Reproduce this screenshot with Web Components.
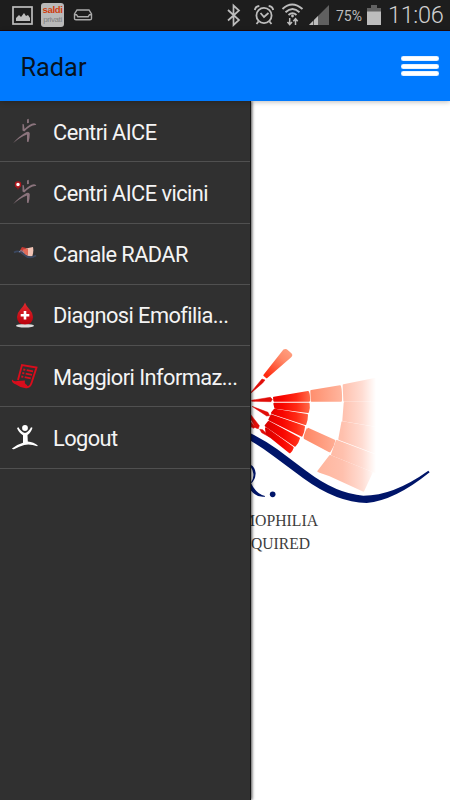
<!DOCTYPE html>
<html lang="it"><head><meta charset="utf-8"><title>Radar</title>
<style>html,body{margin:0;height:100%;overflow:hidden;background:#fff;font-family:Roboto,"Liberation Sans",sans-serif}</style></head>
<body><radar-app></radar-app>
<script>
function define(name, html){
  customElements.define(name, class extends HTMLElement{
    constructor(){super();const t=document.createElement('template');t.innerHTML=html;
      this.attachShadow({mode:'open'}).append(t.content.cloneNode(true));}
  });
}
define('status-bar',`<style>
:host{display:flex;box-sizing:border-box;height:31px;background:#1d1d1d;border-bottom:1px solid #230808;color:#bdbdbd;align-items:center}
svg{display:block;flex:none}
.pct{font-size:14px;width:29px;margin-left:5.500px;flex:none;white-space:nowrap;padding-top:2px}
.time{font-size:23.500px;font-weight:300;margin-left:6.500px;width:62px;flex:none;white-space:nowrap;color:#d0d0d0;letter-spacing:-.35px;line-height:30px}
.app{box-sizing:border-box;width:23px;height:24px;margin-left:8px;border-radius:3px;background:#b9b9b9;font:8px/9px "Liberation Sans",sans-serif;color:#808080;text-align:center;padding-top:2px;letter-spacing:-.4px}
.app b,.app span{display:block}
.app b{color:#d03c0c;font-size:9.500px;line-height:10px;letter-spacing:-.3px}
.gap{flex:1}
</style>
<svg width="21" height="19" style="margin-left:12px" viewBox="0 0 21 19"><rect x="1" y="1" width="19" height="17" fill="none" stroke="#bdbdbd" stroke-width="1.7"/><path d="M4 15v-3l3-3 2 2 3-4 2 3 2-1 2 3v3z" fill="#bdbdbd"/></svg>
<div class="app"><b>saldi</b><span>privati</span></div>
<svg width="20" height="12" style="margin-left:9px" viewBox="0 0 20 12"><path d="M4 1h12l2.500 4v4.500q0 1.300-1.500 1.300H3q-1.500 0-1.500-1.300V5zM1.500 5.700h2l1.300 2h10.400l1.300-2h2" fill="none" stroke="#aaa" stroke-width="1.400"/></svg>
<span class="gap"></span>
<svg width="115" height="30" viewBox="215 0 115 30"><path d="M227 10l11 10-5.500 5V5.500l5.500 5L227 20.500" fill="none" stroke="#bdbdbd" stroke-width="1.700"/>
<g fill="none" stroke="#bdbdbd" stroke-width="1.800"><circle cx="263" cy="15.500" r="7.600"/><path d="M259.500 13l3.500 4 4.500-4M257.500 21.500l-2 2.500M268.500 21.500l2 2.500M253.800 10q.5-3.500 4.500-4M272.200 10q-.5-3.500-4.500-4"/></g>
<g fill="none" stroke="#bdbdbd" stroke-width="1.900"><path d="M281.500 9q9.500-9 20 0M284.500 12.300q7-6.500 14 0M287.500 15q4-3.500 8 0"/></g><circle cx="291.500" cy="16" r="1.400" fill="#bdbdbd"/><path d="M288.700 18v6M286.500 22l2.200 2.700L291 22M294.500 25v-6M292.300 21.300l2.200-2.600 2.200 2.600" fill="none" stroke="#bdbdbd" stroke-width="1.500"/>
<path d="M308 25L328 5v20z" fill="#606060"/><path d="M308 25l4-4v4zM313 25v-5l4-4v9z" fill="#bdbdbd"/></svg>
<span class="pct">75%</span>
<svg width="16" height="22" style="margin-left:.5px" viewBox="0 0 16 22"><path d="M5 1h6v3h4v5H1V4h4z" fill="#626262"/><path d="M1 7.500h14V21H1z" fill="#bdbdbd"/></svg>
<span class="time">11:06</span>`);
define('app-header',`<style>
:host{display:flex;box-sizing:border-box;height:70px;background:#007aff;padding:3px 11px 0 20.500px;align-items:center;justify-content:space-between;font-size:25.300px;color:#07131f;position:relative;z-index:2;box-shadow:0 1px 5px #0004}
.burger{display:grid;gap:2.670px;width:38px;margin-bottom:3px}.burger i{height:5px;border-radius:2px;background:#fff;box-shadow:inset 0 0 1px #007aff}
</style><slot></slot><div class="burger"><i></i><i></i><i></i></div>`);
define('menu-row',`<style>
:host{display:flex;box-sizing:border-box;height:61.250px;border-bottom:1.500px solid #505050;align-items:center;color:#f4f4f4;font-size:21.800px;letter-spacing:-.56px;padding-left:11px;white-space:nowrap}
.ico{width:28px;height:28px;margin-right:14px;flex:none}
.label{padding-top:2px}
</style><div class="ico"><slot name="icon"></slot></div><span class="label"><slot></slot></span>`);
const runner='<path d="M27 19.500l1.700-.8.3 4-2 .5zM22.500 24l1.300.3.700 4.700q5-5 9.500-5.700 2 0 2.300 1.700-5-1-12 6.500l-1.800-1zM13 43.300q6-7.300 13.500-11.300 3-1 3.300 1.500 0 4-1.300 8.500l-1.500-.2V34.500q-7 2.500-14 8.800" fill="#8b747d"/>';
define('side-menu',`<style>
:host{display:block;box-sizing:border-box;width:251px;flex:none;background:#303030;border-right:1px solid #161616;box-shadow:1px 0 3px #000b;position:relative;z-index:1}
svg{display:block}
</style>
<menu-row><svg slot="icon" width="28" height="28" viewBox="11 17 28 28">${runner}</svg>Centri AICE</menu-row>
<menu-row><svg slot="icon" width="28" height="28" viewBox="11 17 28 28">${runner}<path d="M15.500 25l2.500 4 2.500-4" fill="#801a22"/><circle cx="18" cy="23.500" r="2.500" fill="#fff" stroke="#b0161d" stroke-width="1.500"/></svg>Centri AICE vicini</menu-row>
<menu-row><svg slot="icon" width="28" height="28" viewBox="0 0 28 28"><path d="M8 12l3-5 4 1v8z" fill="#c63b34"/><path d="M15 8.500l7-1.500q1 5-1 10l-7-2z" fill="#f1c3b4"/><path d="M12 9.500l5-1v7l-5-2z" fill="#e26b58"/><path d="M3 12.500q5-3 10 2t12 1" fill="none" stroke="#3b4861" stroke-width="1.800"/><path d="M8 12q3-3 5 1" stroke="#7790ae" fill="none"/></svg>Canale RADAR</menu-row>
<menu-row><svg slot="icon" width="28" height="28" viewBox="0 0 28 28"><defs><linearGradient id="d" x2="0" y2="1"><stop stop-color="#e22b2f"/><stop offset="1" stop-color="#b9000c"/></linearGradient></defs><ellipse cx="14" cy="24.800" rx="9" ry="1.700" fill="#ddd"/><path d="M14 1.500q1 3 5 7.500 3 3 3 7 0 7.500-8 7.500T6 16q0-4 3-7 4-4.500 5-7.500" fill="url(#d)"/><path d="M12.700 10h2.600v3h3v2.600h-3v3h-2.600v-3h-3V13h3z" fill="#fff"/></svg>Diagnosi Emofilia...</menu-row>
<menu-row><svg slot="icon" width="28" height="28" viewBox="0 0 28 28"><path d="M7 18L11 3l14.500 2.500L20.500 21q-1.500 4.500-5 4" fill="none" stroke="#d90d1c" stroke-width="1.900"/><path d="M1 17.500q2 2.500 5 1.500l8-.5q-1 3 2 4.500l1 3q-6 1-12-3.500-5-2-4-5" fill="#d90d1c"/><path d="M12.300 7.500l2 .4M15.700 8.100l6.300 1.200M11.300 11l2 .4M14.700 11.600l6.300 1.200M10.300 14.500l2 .4M13.700 15.100l6 1.200" stroke="#d90d1c" stroke-width="1.800"/></svg>Maggiori Informaz...</menu-row>
<menu-row><svg slot="icon" width="28" height="28" viewBox="0 0 28 28"><circle cx="14" cy="5" r="2.900" fill="#fff"/><path d="M6 5l1.500-.8q2 4.300 6.500 5.800 4-1.500 6-5.800l1.500.6q-1.500 5-5 7.200l.3 6.500q6 .5 10 4l-.6.800q-7-2.600-13-1.300-5 1.500-9.700 4-2 .6-2.500-.6 5-4 11-5.700v-7.500Q7.500 9.500 6 5" fill="#fff"/></svg>Logout</menu-row>`);
define('radar-logo',`<style>:host{display:block;flex:1;min-width:0;overflow:hidden}svg{display:block}</style>
<svg width="199" height="699" viewBox="251 101 199 699"><defs>
<linearGradient id="red" gradientUnits="userSpaceOnUse" x1="70" y1="0" x2="212" y2="0"><stop stop-color="#d40000"/><stop offset=".4" stop-color="#f80500"/><stop offset=".7" stop-color="#ff2a15"/><stop offset="1" stop-color="#ff6e4c"/></linearGradient>
<linearGradient id="top" gradientUnits="userSpaceOnUse" x1="80" y1="120" x2="145" y2="50"><stop stop-color="#ff2a10"/><stop offset=".7" stop-color="#ff8968"/><stop offset="1" stop-color="#ff9b7c"/></linearGradient>
<linearGradient id="mid" gradientUnits="userSpaceOnUse" x1="190" y1="0" x2="310" y2="0"><stop stop-color="#ff8562"/><stop offset="1" stop-color="#ffb7a0"/></linearGradient>
<linearGradient id="out" gradientUnits="userSpaceOnUse" x1="240" y1="0" x2="408" y2="0"><stop stop-color="#ffb69e"/><stop offset=".4" stop-color="#ffc0ad"/><stop offset=".75" stop-color="#ffdcd2"/><stop offset="1" stop-color="#fff"/></linearGradient></defs>
<g transform="translate(240 335) scale(.33333)" stroke-linejoin="round" stroke-width="6">
<path fill="#e00d08" stroke="#e00d08" stroke-width="1.500" d="M26 180L66 132l9 3-7 9zM34 196l57-9 6 6-4 7-58-1zM36 214l48 18 5 10-9 1zM30 236l28 36-3 9-8-2-17-30zM30 258l16 18-4 4-12-5zM59 283l9 1 22 23-25-14z"/>
<path fill="url(#top)" stroke="url(#top)" d="M73 121L132 46q5-3 10 2l11 10q3 3-3 8L80 127z"/>
<g fill="url(#red)" stroke="url(#red)"><path d="M102 188l102-17q4 8 3 26H103z"/><path d="M103 206h103q2 14-2 25l-98-13z"/><path d="M104 224l97 16q0 15-5 27L96 234z"/><path d="M94 241l98 34q-1 14-7 27L88 254z"/><path d="M86 261l91 49q-3 12-12 22L77 272z"/><path d="M78 280l80 58q-3 10-9 14l-69-56z"/></g>
<g fill="url(#mid)" stroke="url(#mid)"><path d="M214 168l86-14q4 15 3 43h-88z"/><path d="M203 281l80 36q-3 17-14 32l-75-40q-2-4 9-28"/></g>
<g fill="url(#out)" stroke="url(#out)"><path d="M311 151l97-20v66H313z"/><path d="M314 204h94v68l-98-16z"/><path d="M307 262l101 17v75l-110-42z"/><path d="M290 318l118 44v50l-132-53z"/><path d="M270 363l125 50-25 54-100-46-35-12z"/></g>
<path d="M232 412q28 18 80 36" stroke="#fff" fill="none" stroke-width="2"/>
</g>
<g transform="translate(240 420) scale(.33333)" fill="#001569"><path d="M28 38Q70 58 112 88L200 154Q290 222 370 227 460 227 565 152l4 5Q464 242 380 249 290 248 190 175L100 108Q60 78 28 60z"/><path d="M28 133q17 5 19 27-1 21-14 30 17 34 42 38v2q-27 4-47-24v-14q14-12 12-31-2-16-12-23z"/><circle cx="98" cy="223" r="8.500"/></g>
<g fill="#3d3d3d" font-family="Liberation Serif,serif" font-size="16"><text x="241" y="526" textLength="77" lengthAdjust="spacingAndGlyphs">MOPHILIA</text><text x="251" y="549" textLength="59" lengthAdjust="spacingAndGlyphs">QUIRED</text></g>
</svg>`);
define('radar-app',`<style>:host{display:flex;flex-direction:column;height:800px;width:450px;overflow:hidden}main{display:flex;flex:1;min-height:0}</style>
<status-bar></status-bar><app-header>Radar</app-header><main><side-menu></side-menu><radar-logo></radar-logo></main>`);
</script></body></html>
